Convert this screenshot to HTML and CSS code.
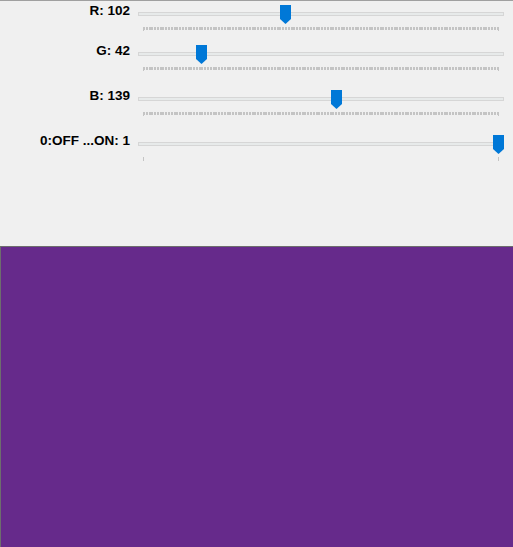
FILE: index.html
```html
<!DOCTYPE html>
<html>
<head>
<meta charset="utf-8">
<link rel="stylesheet" href="styles.css">
</head>
<body>
<div class="controls">
  <div class="row row-first">
    <div class="label">R: 102</div>
    <div class="slider">
      <div class="track"></div>
      <div class="ticks dense"></div>
      <svg class="thumb" style="left: 142px" width="11" height="19" viewBox="0 0 11 19"><polygon points="0,0 11,0 11,14 5.5,19 0,14" fill="#0078d7"/></svg>
    </div>
  </div>
  <div class="row row-second">
    <div class="label">G: 42</div>
    <div class="slider">
      <div class="track"></div>
      <div class="ticks dense"></div>
      <svg class="thumb" style="left: 58px" width="11" height="19" viewBox="0 0 11 19"><polygon points="0,0 11,0 11,14 5.5,19 0,14" fill="#0078d7"/></svg>
    </div>
  </div>
  <div class="row">
    <div class="label">B: 139</div>
    <div class="slider">
      <div class="track"></div>
      <div class="ticks dense"></div>
      <svg class="thumb" style="left: 193px" width="11" height="19" viewBox="0 0 11 19"><polygon points="0,0 11,0 11,14 5.5,19 0,14" fill="#0078d7"/></svg>
    </div>
  </div>
  <div class="row">
    <div class="label">0:OFF ...ON: 1</div>
    <div class="slider">
      <div class="track"></div>
      <div class="ticks sparse"></div>
      <svg class="thumb" style="left: 355px" width="11" height="19" viewBox="0 0 11 19"><polygon points="0,0 11,0 11,14 5.5,19 0,14" fill="#0078d7"/></svg>
    </div>
  </div>
</div>
<div class="panel"></div>
</body>
</html>
```
FILE: styles.css
```css
html, body {
  margin: 0;
  padding: 0;
}
body {
  background: #f0f0f0;
  border-top: 1px solid #a0a0a0;
  overflow: hidden;
  height: 546px;
  font-family: "Liberation Sans", Arial, sans-serif;
}
.controls {
  height: 245px;
  padding-top: 4px;
  box-sizing: border-box;
}
.row {
  display: grid;
  grid-template-columns: 130px 366px;
  column-gap: 8px;
  height: 25px;
  margin-top: 20px;
}
.row-first {
  margin-top: 0;
}
.row-second {
  margin-top: 15px;
}
.label {
  text-align: right;
  font-size: 13.5px;
  font-weight: bold;
  line-height: 15px;
  color: #000;
  margin-top: -2px;
}
.slider {
  position: relative;
  height: 25px;
}
.track {
  position: absolute;
  left: 0;
  top: 7px;
  width: 366px;
  height: 4px;
  box-sizing: border-box;
  border: 1px solid #d6d6d6;
  background: #e7eaea;
}
.ticks {
  position: absolute;
  left: 5px;
  top: 22px;
  width: 356px;
  height: 4px;
}
.ticks.dense {
  background:
    linear-gradient(#c4c4c4, #c4c4c4) left top / 1px 4px no-repeat,
    linear-gradient(#c4c4c4, #c4c4c4) right top / 1px 4px no-repeat,
    repeating-linear-gradient(90deg, #c4c4c4 0, #c4c4c4 2px, transparent 2px, transparent 2.784px) left top / 356px 3px no-repeat;
}
.ticks.sparse {
  background:
    linear-gradient(#c4c4c4, #c4c4c4) left top / 1px 4px no-repeat,
    linear-gradient(#c4c4c4, #c4c4c4) right top / 1px 4px no-repeat;
}
.thumb {
  position: absolute;
  top: 0;
  display: block;
}
.panel {
  height: 301px;
  margin-right: -2px;
  background: #662a8b;
  border-top: 1px solid #6d6d6d;
  border-left: 1px solid #6d6d6d;
}
```
